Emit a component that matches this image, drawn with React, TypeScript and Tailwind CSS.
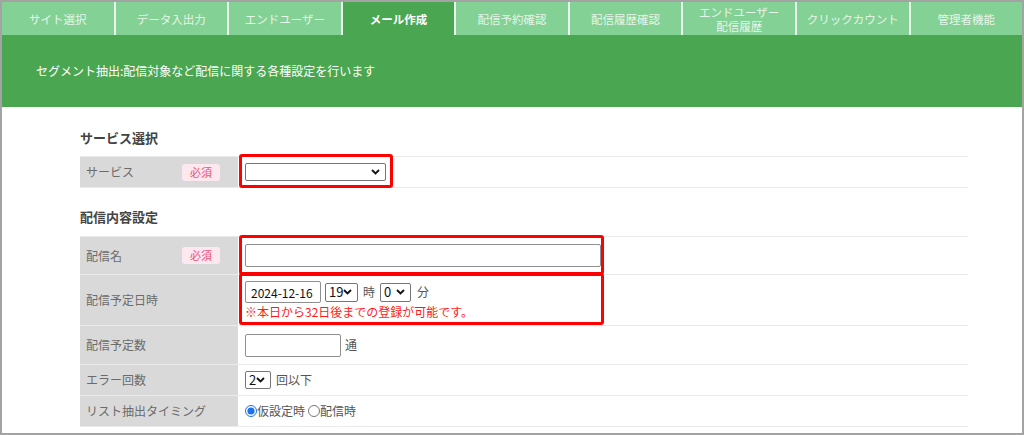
import React from 'react';

const tabs = [
  'サイト選択',
  'データ入出力',
  'エンドユーザー',
  'メール作成',
  '配信予約確認',
  '配信履歴確認',
  'エンドユーザー\n配信履歴',
  'クリックカウント',
  '管理者機能',
];

const Chevron = () => (
  <svg width="9" height="6" viewBox="0 0 9 6" className="shrink-0">
    <path d="M1 1l3.5 3.5L8 1" fill="none" stroke="#111" strokeWidth="1.8" />
  </svg>
);

const FakeSelect: React.FC<{ value?: string; className: string }> = ({ value, className }) => (
  <div
    className={`flex items-center justify-between border border-[#767676] rounded-[2px] bg-white pl-[3px] pr-[5px] text-[13px] text-[#111] ${className}`}
  >
    <span>{value ?? ''}</span>
    <Chevron />
  </div>
);

const Badge = () => (
  <span className="ml-auto mr-[18px] px-[8px] h-[17px] leading-[17px] rounded-[3px] bg-[#fde8ef] text-[#ef4f73] text-[11px]">
    必須
  </span>
);

const RedBox: React.FC<{ className: string }> = ({ className }) => (
  <div className={`absolute border-[3px] border-[#ff0000] rounded-[3px] pointer-events-none ${className}`} />
);

const Row: React.FC<{
  label: string;
  required?: boolean;
  h: string;
  children?: React.ReactNode;
  box?: string;
}> = ({ label, required, h, children, box }) => (
  <div className={`flex border-b border-[#ebebeb] ${h}`}>
    <div className="w-[158px] shrink-0 bg-[#d9d9d9] flex items-center pl-[6px] text-[12px] text-[#6b6b6b]">
      {label}
      {required && <Badge />}
    </div>
    <div className="relative flex-1 flex items-center pl-[7px] text-[12px] text-[#555]">
      {children}
      {box && <RedBox className={box} />}
    </div>
  </div>
);

export default function App() {
  return (
    <div
      className="w-[1024px] h-[435px] border-2 border-[#a3a3a3] bg-white overflow-hidden"
      style={{ fontFamily: '"Noto Sans CJK JP", "Noto Sans", sans-serif' }}
    >
      {/* タブ */}
      <div className="flex h-[33px]">
        {tabs.map((t, i) => {
          const active = t === 'メール作成';
          return (
            <div
              key={t}
              className={`flex-1 flex items-center justify-center text-center whitespace-pre-line text-[11.5px] leading-[14px] ${
                i > 0 ? 'border-l-2 border-[#eaf6ec]' : ''
              } ${active ? 'bg-[#4ba651] text-white font-bold' : 'bg-[#84d196] text-[#e6f5e9]'}`}
            >
              {t}
            </div>
          );
        })}
      </div>

      {/* 説明 */}
      <div className="h-[72px] bg-[#4ba651] flex items-center pl-[34px] text-[12px] text-white">
        セグメント抽出:配信対象など配信に関する各種設定を行います
      </div>

      <div className="ml-[78px] w-[888px] pt-[21px]">
        <h2 className="h-[20px] leading-[20px] text-[13px] font-bold text-[#444] mb-[8px]">サービス選択</h2>
        <div className="border-t border-[#ebebeb]">
          <Row label="サービス" required h="h-[31px]" box="left-[1px] -top-[3px] w-[154px] h-[34px]">
            <FakeSelect className="w-[141px] h-[18px]" />
          </Row>
        </div>

        <h2 className="h-[20px] leading-[20px] text-[13px] font-bold text-[#444] mt-[19px] mb-[9px]">配信内容設定</h2>
        <div className="border-t border-[#ebebeb]">
          <Row label="配信名" required h="h-[38px]" box="left-[1px] -top-[2px] w-[365px] h-[40px]">
            <input
              type="text"
              className="w-[356px] h-[23px] border border-[#8f8f8f] rounded-[2px] bg-white"
            />
          </Row>
          <Row label="配信予定日時" h="h-[51px]" box="left-[1px] -top-[2px] w-[365px] h-[52px]">
            <div className="flex flex-col gap-[2px]">
              <div className="flex items-center">
                <input
                  type="text"
                  defaultValue="2024-12-16"
                  className="w-[76px] h-[22px] border border-[#8f8f8f] rounded-[2px] bg-white px-[5px] text-[12px] text-[#111]"
                />
                <FakeSelect value="19" className="ml-[4px] w-[33px] h-[19px]" />
                <span className="mx-[5px]">時</span>
                <FakeSelect value="0" className="w-[31px] h-[19px]" />
                <span className="ml-[6px]">分</span>
              </div>
              <div className="text-[12px] leading-[14px] text-[#ff1a1a]">※本日から32日後までの登録が可能です。</div>
            </div>
          </Row>
          <Row label="配信予定数" h="h-[39px]">
            <input
              type="text"
              className="w-[96px] h-[23px] border border-[#8f8f8f] rounded-[2px] bg-white"
            />
            <span className="ml-[4px]">通</span>
          </Row>
          <Row label="エラー回数" h="h-[31px]">
            <FakeSelect value="2" className="w-[26px] h-[18px]" />
            <span className="ml-[5px]">回以下</span>
          </Row>
          <Row label="リスト抽出タイミング" h="h-[31px]">
            <label className="flex items-center">
              <input type="radio" name="timing" defaultChecked className="w-[12px] h-[12px] m-0 accent-[#1a73e8]" />
              <span>仮設定時</span>
            </label>
            <label className="flex items-center ml-[3px]">
              <input type="radio" name="timing" className="w-[12px] h-[12px] m-0" />
              <span>配信時</span>
            </label>
          </Row>
        </div>
      </div>
    </div>
  );
}
